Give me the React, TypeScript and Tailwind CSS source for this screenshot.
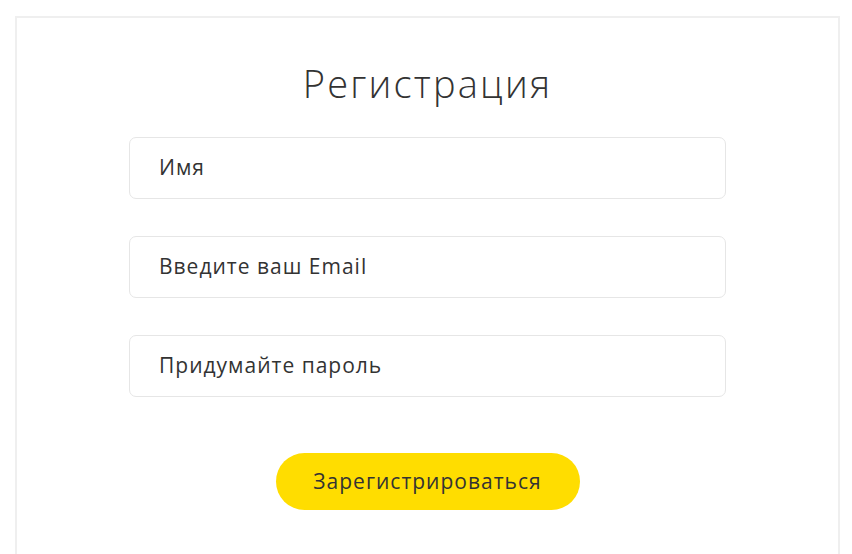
export default function App() {
  const fields = ['Имя', 'Введите ваш Email', 'Придумайте пароль']

  return (
    <div className="min-h-screen bg-white pt-[16px] pl-[15px] font-['Open_Sans',sans-serif] text-[#333]">
      <div className="w-[825px] h-[560px] border-2 border-[#efefef] bg-white flex flex-col items-center">
        <h1 className="mt-[43px] text-[38px] leading-[44px] font-light text-[#333] tracking-[2.2px]">
          Регистрация
        </h1>

        <form className="mt-[32px] flex flex-col gap-[37px]">
          {fields.map((label) => (
            <input
              key={label}
              type="text"
              placeholder={label}
              className="w-[597px] h-[62px] rounded-[7px] border border-[#e6e6e6] px-[29px] pb-[2px] text-[21px] tracking-[1px] text-[#333] placeholder:text-[#333] outline-none"
            />
          ))}
        </form>

        <button className="mt-[56px] w-[304px] h-[57px] rounded-full bg-[#ffdd00] text-[21px] tracking-[1px] text-[#333]">
          Зарегистрироваться
        </button>
      </div>
    </div>
  )
}
